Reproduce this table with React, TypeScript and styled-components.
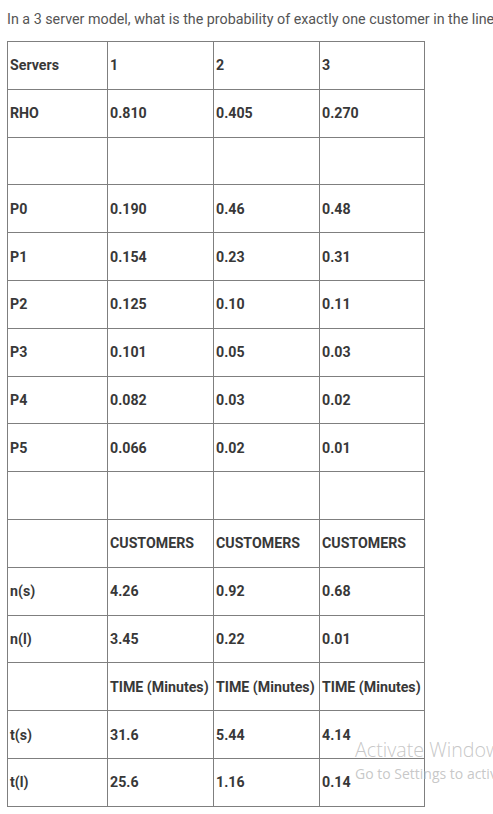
import React from "react";
import styled, { createGlobalStyle } from "styled-components";

const Global = createGlobalStyle`
  html, body { margin: 0; padding: 0; background: #fff; overflow: hidden; }
  body { font-family: Roboto, "Liberation Sans", Arial, sans-serif; }
`;

const Page = styled.div`
  position: relative;
  width: 493px;
  height: 814px;
  overflow: hidden;
  padding: 9px 0 0 7px;
  box-sizing: border-box;
`;

const Question = styled.p`
  margin: 0;
  font-size: 14.3px;
  line-height: 20px;
  color: #555;
  white-space: nowrap;
`;

const Table = styled.table`
  margin-top: 12px;
  border-collapse: collapse;
  table-layout: fixed;
  width: 417px;
`;

const Row = styled.tr`
  height: 47.8px;
`;

const Cell = styled.td<{ $w?: number }>`
  box-sizing: border-box;
  border: 1px solid #7f7f7f;
  padding: 0 2px;
  font-size: 14.2px;
  font-weight: 700;
  color: #383838;
  vertical-align: middle;
  white-space: nowrap;
  overflow: visible;
  ${(p) => (p.$w ? `width: ${p.$w}px;` : "")}
`;

const Watermark = styled.div`
  position: absolute;
  left: 355px;
  top: 738px;
  color: rgba(185, 185, 185, 0.8);
  font-family: "Open Sans", "DejaVu Sans", sans-serif;
  pointer-events: none;
`;

const WmTitle = styled.div`
  font-size: 19.7px;
  font-weight: 300;
  line-height: 24px;
  white-space: nowrap;
`;

const WmSub = styled.div`
  margin-top: 2px;
  font-size: 14px;
  font-weight: 400;
  line-height: 20px;
  white-space: nowrap;
`;

const rows: string[][] = [
  ["Servers", "1", "2", "3"],
  ["RHO", "0.810", "0.405", "0.270"],
  ["", "", "", ""],
  ["P0", "0.190", "0.46", "0.48"],
  ["P1", "0.154", "0.23", "0.31"],
  ["P2", "0.125", "0.10", "0.11"],
  ["P3", "0.101", "0.05", "0.03"],
  ["P4", "0.082", "0.03", "0.02"],
  ["P5", "0.066", "0.02", "0.01"],
  ["", "", "", ""],
  ["", "CUSTOMERS", "CUSTOMERS", "CUSTOMERS"],
  ["n(s)", "4.26", "0.92", "0.68"],
  ["n(l)", "3.45", "0.22", "0.01"],
  ["", "TIME (Minutes)", "TIME (Minutes)", "TIME (Minutes)"],
  ["t(s)", "31.6", "5.44", "4.14"],
  ["t(l)", "25.6", "1.16", "0.14"],
];

const widths = [100, 106, 106, 105];

export default function App() {
  return (
    <>
      <Global />
      <Page>
        <Question>
          In a 3 server model, what is the probability of exactly one customer in the line?
        </Question>
        <Table>
          <tbody>
            {rows.map((r, i) => (
              <Row key={i}>
                {r.map((c, j) => (
                  <Cell key={j} $w={i === 0 ? widths[j] : undefined}>
                    {c}
                  </Cell>
                ))}
              </Row>
            ))}
          </tbody>
        </Table>
        <Watermark>
          <WmTitle>Activate Windows</WmTitle>
          <WmSub>Go to Settings to activate Windows.</WmSub>
        </Watermark>
      </Page>
    </>
  );
}
